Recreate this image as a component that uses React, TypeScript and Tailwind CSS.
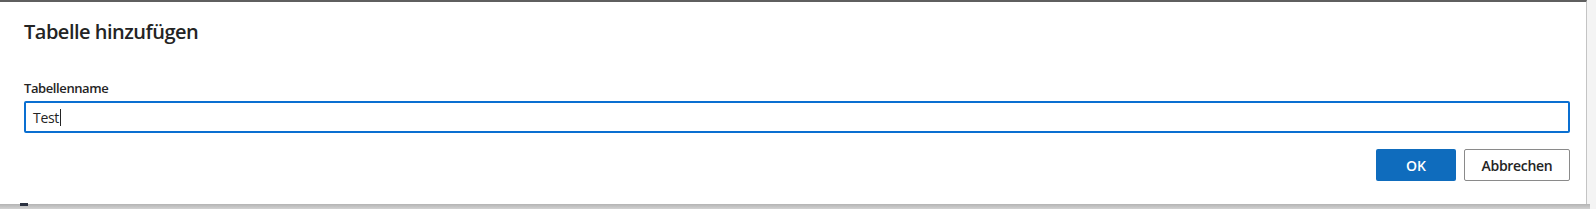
const font = { fontFamily: '"Open Sans", "Noto Sans", sans-serif' };

export default function App() {
  return (
    <div className="relative flex h-[209px] w-full flex-col overflow-hidden bg-[#f4f4f4]" style={font}>
      <div className="flex h-[204px] w-[1587px] shrink-0 flex-col border-t-2 border-r border-[#5f5f5f] border-r-[#c4c4c4] bg-white pl-[24px] pr-[16px] pt-[16px]">
        <h1 className="text-[20px] font-semibold leading-[28px] tracking-[-0.5px] text-[#242424]">Tabelle hinzufügen</h1>

        <label className="mt-[32px] text-[13px] font-semibold leading-[20px] tracking-[-0.4px] text-[#242424]">Tabellenname</label>
        <div className="mt-[3px] flex h-[32px] items-center rounded-[2px] border-2 border-[#0a6fd1] px-[7px] text-[14px] tracking-[-0.3px] text-[#242424]">
          <span>Test</span>
          <span className="ml-px h-[17px] w-px bg-[#242424]" />
        </div>

        <div className="mt-[16px] flex justify-end gap-[8px]">
          <button className="h-[32px] w-[80px] rounded-[2px] bg-[#0f6cbd] text-[14px] font-semibold text-white">OK</button>
          <button className="h-[32px] w-[106px] rounded-[2px] border border-[#8a8a8a] bg-white text-[14px] font-semibold tracking-[-0.3px] text-[#242424]">
            Abbrechen
          </button>
        </div>
      </div>
      <div className="h-[5px] w-[1590px] bg-gradient-to-b from-[#b4b4b4] to-[#d2d2d2]" />
      <div className="absolute bottom-[3px] left-[20px] h-[3px] w-[8px] bg-[#2a3140]" />
    </div>
  );
}
